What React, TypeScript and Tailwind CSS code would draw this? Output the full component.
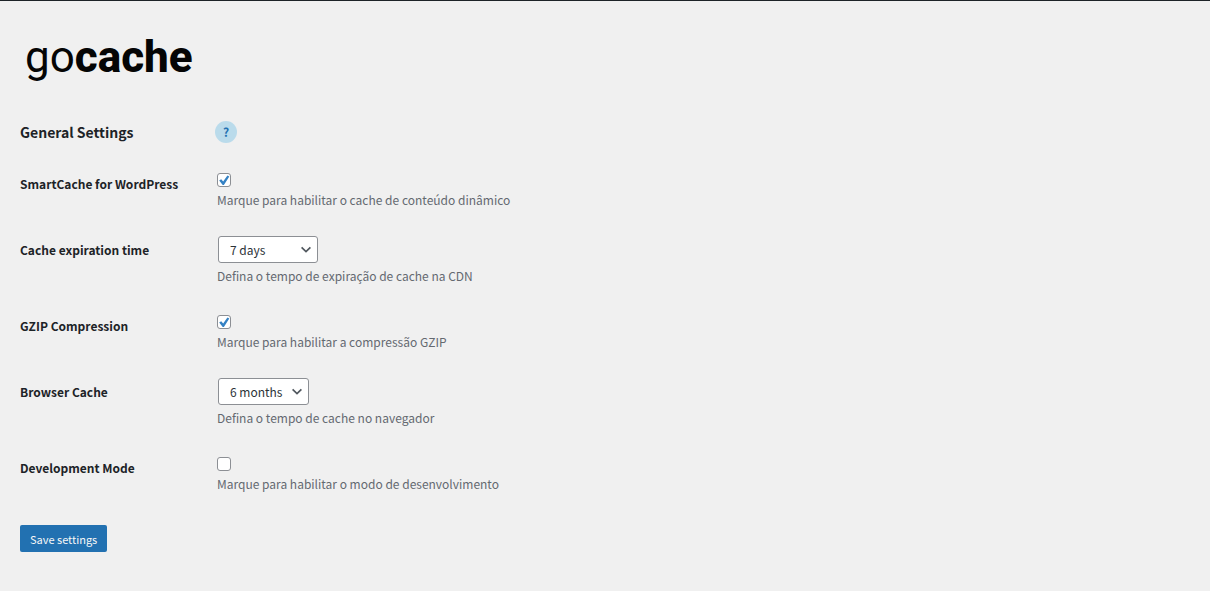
import { useState, type ReactNode } from "react";

function Row({ id, label, hint, children }: { id: string; label: string; hint: string; children: ReactNode }) {
  return (
    <div className="grid grid-cols-[197px_1fr] items-start">
      <label htmlFor={id} className="pt-1.5 text-[12px] leading-4 font-semibold text-[#1d2327]">
        {label}
      </label>
      <div className="flex flex-col items-start">
        {children}
        <p id={`${id}-hint`} className="pt-1 text-[12px] leading-[18px] text-[#646970]">
          {hint}
        </p>
      </div>
    </div>
  );
}

function Check({ id, initial = false }: { id: string; initial?: boolean }) {
  const [checked, setChecked] = useState(initial);
  return (
    <span className="mt-[3px] grid h-[14px] w-[14px]">
      <input
        id={id}
        type="checkbox"
        aria-describedby={`${id}-hint`}
        checked={checked}
        onChange={(e) => setChecked(e.target.checked)}
        className="col-start-1 row-start-1 h-[14px] w-[14px] appearance-none rounded-[3px] border border-[#8c8f94] bg-white"
      />
      {checked && (
        <svg viewBox="0 0 14 14" className="pointer-events-none col-start-1 row-start-1 h-[14px] w-[14px]" aria-hidden="true">
          <path d="M2.2 7.4 4.2 6.2 6.2 8.5 10.4 2.6 12.3 3.5 6.9 11.9 5.7 11.9Z" fill="#3582c4" />
        </svg>
      )}
    </span>
  );
}

function Choice({ id, initial, options, width }: { id: string; initial: string; options: string[]; width: string }) {
  return (
    <span className={`ml-px grid h-[27px] ${width}`}>
      <select
        id={id}
        defaultValue={initial}
        aria-describedby={`${id}-hint`}
        className="col-start-1 row-start-1 h-[27px] w-full appearance-none rounded-[3px] border border-[#8c8f94] bg-white pl-[11px] text-[12px] leading-4 text-[#2c3338]"
      >
        {options.map((o) => (
          <option key={o}>{o}</option>
        ))}
      </select>
      <svg
        viewBox="0 0 10 7"
        className="pointer-events-none col-start-1 row-start-1 mr-[7px] h-[7px] w-[10px] self-center justify-self-end"
        fill="none"
        stroke="#50575e"
        strokeWidth="1.7"
        aria-hidden="true"
      >
        <path d="M0.6 1.4 5 5.6 9.4 1.4" />
      </svg>
    </span>
  );
}

export default function App() {
  return (
    <main className="min-h-screen border-t border-[#1d2327] bg-[#f0f0f0] px-5 font-['Noto_Sans_CJK_SC','Noto_Sans',sans-serif]">
      <svg viewBox="0 0 180 60" className="mt-[27px] h-[60px] w-[180px]" role="img" aria-label="gocache">
        <text x="5" y="44" fontSize="44" fill="#050505" className="font-['Roboto',sans-serif]">
          <tspan fontWeight="400">go</tspan>
          <tspan fontWeight="800">cache</tspan>
        </text>
      </svg>

      <div className="mt-8 grid grid-cols-[195px_1fr] items-center">
        <h1 className="text-[14px] leading-6 font-semibold text-[#1d2327]">General Settings</h1>
        <button
          type="button"
          aria-label="Help"
          className="flex h-[22px] w-[22px] items-center justify-center rounded-full bg-[#badbeb] text-[12px] leading-4 font-bold text-[#2271b1]"
        >
          ?
        </button>
      </div>

      <form className="mt-[26px] pb-9" onSubmit={(e) => e.preventDefault()}>
        <div className="flex flex-col gap-[27px]">
          <Row id="smartcache" label="SmartCache for WordPress" hint="Marque para habilitar o cache de conteúdo dinâmico">
            <Check id="smartcache" initial />
          </Row>
          <Row id="expiration" label="Cache expiration time" hint="Defina o tempo de expiração de cache na CDN">
            <Choice id="expiration" initial="7 days" width="w-[100px]" options={["1 day", "7 days", "30 days"]} />
          </Row>
          <Row id="gzip" label="GZIP Compression" hint="Marque para habilitar a compressão GZIP">
            <Check id="gzip" initial />
          </Row>
          <Row id="browser" label="Browser Cache" hint="Defina o tempo de cache no navegador">
            <Choice id="browser" initial="6 months" width="w-[91px]" options={["1 month", "6 months"]} />
          </Row>
          <Row id="devmode" label="Development Mode" hint="Marque para habilitar o modo de desenvolvimento">
            <Check id="devmode" />
          </Row>
        </div>
        <button type="submit" className="mt-8 h-[27px] rounded-[2px] bg-[#2271b1] px-[10px] text-[11px] leading-4 text-[#f6f7f7]">
          Save settings
        </button>
      </form>
    </main>
  );
}
